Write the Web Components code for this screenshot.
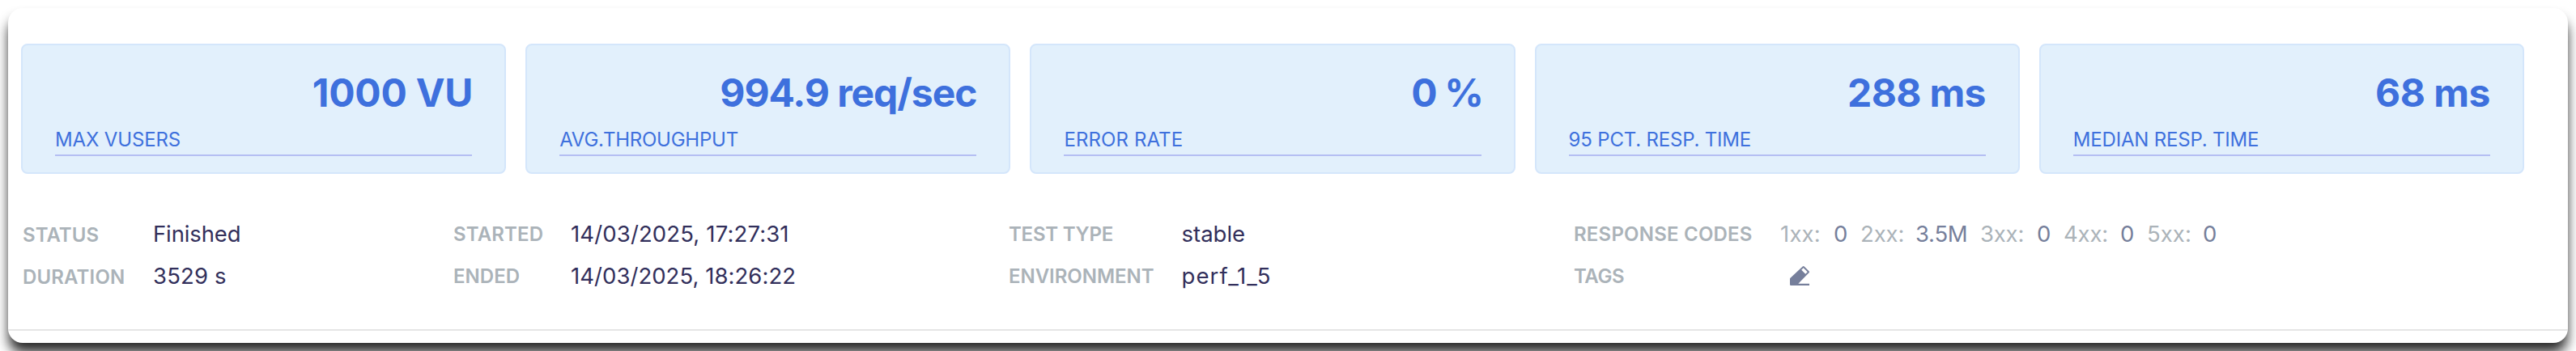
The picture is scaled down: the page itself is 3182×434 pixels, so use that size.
<!DOCTYPE html>
<html lang="en"><head><meta charset="utf-8"><title>Test report summary</title>
<style>html,body{margin:0;height:434px;overflow:hidden;background:#fff}body{font-family:Inter,"Liberation Sans",sans-serif}</style></head>
<body>
<report-panel>
  <stat-row slot="stats">
    <stat-card label="MAX VUSERS" value="1000 VU" ls="-.15" vs="-.25" end="-1"></stat-card>
    <stat-card label="AVG.THROUGHPUT" value="994.9 req/sec" ls="-.24" vs="-1.05" end="0"></stat-card>
    <stat-card label="ERROR RATE" value="0 %" ls=".11" vs="-1.4" end="-2"></stat-card>
    <stat-card label="95 PCT. RESP. TIME" value="288 ms" ls="-.19" vs="-.68" end="0"></stat-card>
    <stat-card label="MEDIAN RESP. TIME" value="68 ms" ls="-.19" vs="-.5" end="0"></stat-card>
  </stat-row>
  <info-grid slot="info">
    <info-item label="STATUS" ls=".04" style="--drop:2px"><info-text ls="-.12">Finished</info-text></info-item>
    <info-item label="STARTED" ls=".16"><info-text ls=".14">14/03/2025, 17:27:31</info-text></info-item>
    <info-item label="TEST TYPE" ls="-.25"><info-text ls="0">stable</info-text></info-item>
    <info-item label="RESPONSE CODES" ls=".21">
      <code-counts></code-counts>
    </info-item>
    <info-item label="DURATION" ls=".15" style="--drop:2px"><info-text ls=".17">3529 s</info-text></info-item>
    <info-item label="ENDED" ls=".05"><info-text ls=".05">14/03/2025, 18:26:22</info-text></info-item>
    <info-item label="ENVIRONMENT" ls="-.04"><info-text ls="1.1">perf_1_5</info-text></info-item>
    <info-item label="TAGS" ls="-.41"><edit-icon></edit-icon></info-item>
  </info-grid>
</report-panel>
<script>
class Base extends HTMLElement{
  connectedCallback(){this.attachShadow({mode:'open'}).innerHTML=this.render()}
  a(n){return this.getAttribute(n)}
}
customElements.define('report-panel',class extends Base{render(){return `<style>
:host{display:block;padding:10px 10px 0}
.panel{box-sizing:border-box;height:414px;border-radius:18px;background:#fff;box-shadow:0 13px 15px -1px rgba(0,0,0,.84);padding:44px 54px 0 16px;display:flex;flex-direction:column;overflow:hidden}
.rule{height:2px;background:#e5e5e5;margin:auto -54px 15px -16px;flex:none}
</style><div class="panel"><slot name="stats"></slot><slot name="info"></slot><div class="rule"></div></div>`}});
customElements.define('stat-row',class extends Base{render(){return `<style>
:host{display:grid;grid-template-columns:repeat(5,1fr);gap:24px}
</style><slot></slot>`}});
customElements.define('stat-card',class extends Base{render(){return `<style>
:host{display:block;box-sizing:border-box;height:161px;border:2px solid #d4e6fb;border-radius:8px;background:#e2f0fc;padding:29px 40px 0;color:#3e70dd}
.v{font:700 48px/60px Inter,sans-serif;letter-spacing:${this.a('vs')}px;text-align:right;margin-right:${this.a('end')}px;white-space:pre}
.l{font:400 24px/36px Inter,sans-serif;letter-spacing:${this.a('ls')}px;border-bottom:2px solid #b5bff3;padding:10px 0 0;white-space:pre}
</style><div class="v">${this.a('value')}</div><div class="l">${this.a('label')}</div>`}});
customElements.define('info-grid',class extends Base{render(){return `<style>
:host{display:grid;grid-template-columns:532px 686px 698px auto;grid-auto-rows:36px;row-gap:16px;margin:56px 0 0 2px}
::slotted(:nth-child(4n+1)){--w:161px}
::slotted(:nth-child(4n+2)){--w:145px}
::slotted(:nth-child(4n+3)){--w:213.500px}
::slotted(:nth-child(4n+4)){--w:255px}
</style><slot></slot>`}});
customElements.define('info-item',class extends Base{render(){return `<style>
:host{display:grid;grid-template-columns:var(--w) auto;justify-content:start;align-items:start}
.k{font:600 24px/36px Inter,sans-serif;color:#abb3b9;letter-spacing:${this.a('ls')}px;padding-top:var(--drop,1px);white-space:pre}
</style><div class="k">${this.a('label')}</div><slot></slot>`}});
customElements.define('info-text',class extends Base{render(){return `<style>
:host{display:block;font:400 27.5px/36px Inter,sans-serif;color:#322f5b;letter-spacing:${this.a('ls')}px;white-space:pre}
</style><slot></slot>`}});
customElements.define('code-counts',class extends Base{render(){
const d=[['1xx:','0',.2,0],['2xx:','3.5M',-.13,-.25],['3xx:','0',-.2,0],['4xx:','0',-.2,0],['5xx:','0',.05,0]];
return `<style>
:host{display:grid;grid-template-columns:66px 33px 68px 80px 70px 33px 70px 33px 69px auto;font:400 27.5px/36px Inter,sans-serif}
.k{color:#abb3b9}.n{color:#767f9b}
</style>`+d.map(([k,n,a,b])=>`<span class="k" style="letter-spacing:${a}px">${k}</span><span class="n" style="letter-spacing:${b}px">${n}</span>`).join('')}});
customElements.define('edit-icon',class extends Base{render(){return `<style>
:host{display:block;padding:6px 0 0 12px}svg{display:block}
</style><svg width="24" height="24" viewBox="0 0 24 24" fill="#767f9b"><path fill-rule="evenodd" d="M15.7.5q1-.9 2 0l5.800 5.800q1 1 0 2L10.300 21.800H24V24H1.200Q0 24 0 22.800V16q0-.7.5-1.200ZM16.700 2.200l-2.500 2.500 5 5 2.500-2.500Z"/></svg>`}});
</script></body></html>
